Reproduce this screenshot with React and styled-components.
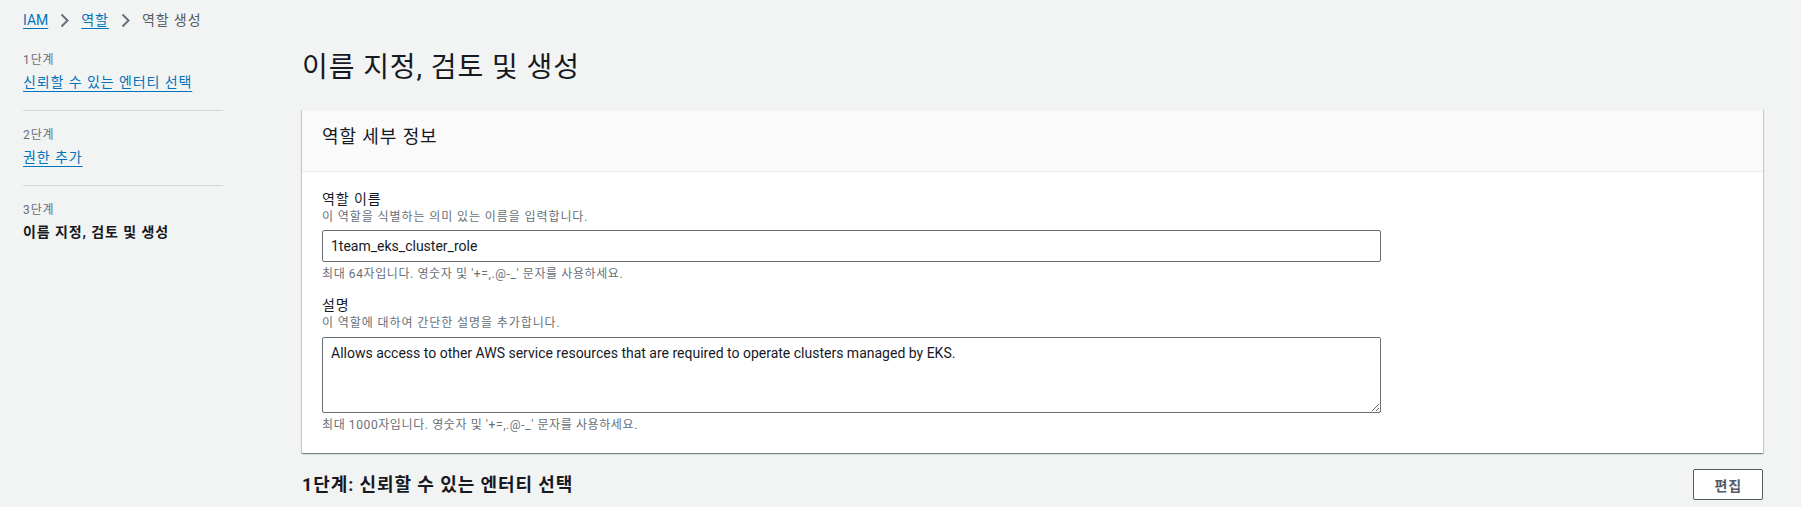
import React from "react"
import styled, { createGlobalStyle } from "styled-components"

const GlobalStyle = createGlobalStyle`
  html, body {
    margin: 0;
    padding: 0;
    background: #f2f3f3;
    font-family: Roboto, "Noto Sans CJK KR", sans-serif;
    color: #16191f;
    font-size: 14px;
  }
  body {
    overflow: hidden;
  }
`

// hangul in the reference runs a little wider than Noto Sans CJK KR
const Page = styled.div`
  padding: 10px 38px 0 23px;
  box-sizing: border-box;
  width: 1801px;
  height: 507px;
  letter-spacing: 0.065em;
`

const Breadcrumbs = styled.nav`
  display: flex;
  align-items: center;
  gap: 12px;
  height: 20px;
  line-height: 20px;
  font-size: 14px;
`

const Crumb = styled.a`
  color: ${p => (p.$current ? "#545b64" : "#0073bb")};
  text-decoration: ${p => (p.$current ? "none" : "underline")};
  text-underline-offset: 3px;
  letter-spacing: ${p => (p.$latin ? "normal" : "inherit")};
`

const Layout = styled.div`
  display: grid;
  grid-template-columns: 200px 1fr;
  column-gap: 79px;
  margin-top: 20px;
`

const Steps = styled.ol`
  list-style: none;
  margin: 2px 0 0;
  padding: 0;
`

const Step = styled.li`
  padding-bottom: 18px;
  margin-bottom: 16px;
  border-bottom: 1px solid #d5dbdb;

  &:last-child {
    border-bottom: none;
  }
`

const StepLabel = styled.div`
  font-size: 12px;
  line-height: 16px;
  color: #687078;
  margin-bottom: 4px;
`

const StepLink = styled.a`
  display: inline-block;
  font-size: 14px;
  line-height: 20px;
  color: #0073bb;
  text-decoration: underline;
  text-underline-offset: 4px;
`

const StepCurrent = styled.div`
  font-size: 14px;
  line-height: 20px;
  font-weight: 700;
  color: #16191f;
`

const Main = styled.main`
  min-width: 0;
`

const Title = styled.h1`
  margin: 0 0 23px;
  font-size: 28px;
  line-height: 36px;
  font-weight: 400;
  color: #16191f;
`

const Container = styled.section`
  background: #fff;
  box-shadow: 0 1px 1px 0 rgba(0, 28, 36, 0.3), 1px 1px 1px 0 rgba(0, 28, 36, 0.15),
    -1px 1px 1px 0 rgba(0, 28, 36, 0.15);
  border-top: 1px solid #eaeded;
`

const ContainerHeader = styled.div`
  background: #fafafa;
  border-bottom: 1px solid #eaeded;
  padding: 16px 20px 23px;
`

const ContainerTitle = styled.h2`
  margin: 0;
  font-size: 18px;
  line-height: 22px;
  font-weight: 400;
  color: #16191f;
`

const ContainerBody = styled.div`
  padding: 17px 20px 20px;
  display: flex;
  flex-direction: column;
  gap: 13px;
`

const Field = styled.div`
  display: flex;
  flex-direction: column;
`

const Label = styled.label`
  font-size: 14px;
  line-height: 20px;
  color: #16191f;
`

const Description = styled.div`
  font-size: 12px;
  line-height: 16px;
  color: #687078;
  margin-bottom: ${p => p.$gap || 5}px;
`

const Constraint = styled.div`
  font-size: 12px;
  line-height: 16px;
  color: #687078;
  letter-spacing: 0.05em;
  margin-top: 4px;
`

const TextInput = styled.input`
  box-sizing: border-box;
  width: 1059px;
  height: 32px;
  padding: 4px 8px;
  border: 1px solid #687078;
  border-radius: 2px;
  font-family: inherit;
  font-size: 14px;
  letter-spacing: normal;
  color: #16191f;
  background: #fff;
  outline: none;
`

const TextArea = styled.textarea`
  display: block;
  box-sizing: border-box;
  width: 1059px;
  height: 76px;
  padding: 4px 8px;
  border: 1px solid #687078;
  border-radius: 2px;
  font-family: inherit;
  font-size: 14px;
  letter-spacing: normal;
  line-height: 22px;
  color: #16191f;
  background: #fff;
  resize: vertical;
  outline: none;
`

const SectionRow = styled.div`
  display: flex;
  align-items: center;
  justify-content: space-between;
  margin-top: 16px;
`

const SectionTitle = styled.h2`
  margin: 0;
  font-size: 18px;
  line-height: 22px;
  font-weight: 700;
  color: #16191f;
`

const Button = styled.button`
  height: 31px;
  padding: 0 20px;
  background: #fff;
  border: 1px solid #545b64;
  border-radius: 2px;
  font-family: inherit;
  font-size: 14px;
  font-weight: 700;
  letter-spacing: inherit;
  color: #545b64;
`

const Chevron = () => (
  <svg width="9" height="15" viewBox="0 0 9 15" aria-hidden="true">
    <path d="M1.5 1.5 L7.5 7.5 L1.5 13.5" fill="none" stroke="#687078" strokeWidth="2" />
  </svg>
)

const steps = [
  { label: "1단계", title: "신뢰할 수 있는 엔터티 선택" },
  { label: "2단계", title: "권한 추가" },
  { label: "3단계", title: "이름 지정, 검토 및 생성", current: true },
]

const App = () => {
  return (
    <>
      <GlobalStyle />
      <Page>
        <Breadcrumbs>
          <Crumb href="#" $latin>IAM</Crumb>
          <Chevron />
          <Crumb href="#">역할</Crumb>
          <Chevron />
          <Crumb $current>역할 생성</Crumb>
        </Breadcrumbs>
        <Layout>
          <Steps>
            {steps.map(s => (
              <Step key={s.label}>
                <StepLabel>{s.label}</StepLabel>
                {s.current ? (
                  <StepCurrent>{s.title}</StepCurrent>
                ) : (
                  <StepLink href="#">{s.title}</StepLink>
                )}
              </Step>
            ))}
          </Steps>
          <Main>
            <Title>이름 지정, 검토 및 생성</Title>
            <Container>
              <ContainerHeader>
                <ContainerTitle>역할 세부 정보</ContainerTitle>
              </ContainerHeader>
              <ContainerBody>
                <Field>
                  <Label>역할 이름</Label>
                  <Description>이 역할을 식별하는 의미 있는 이름을 입력합니다.</Description>
                  <TextInput defaultValue="1team_eks_cluster_role" />
                  <Constraint>최대 64자입니다. 영숫자 및 '+=,.@-_' 문자를 사용하세요.</Constraint>
                </Field>
                <Field>
                  <Label>설명</Label>
                  <Description $gap={6}>이 역할에 대하여 간단한 설명을 추가합니다.</Description>
                  <TextArea defaultValue="Allows access to other AWS service resources that are required to operate clusters managed by EKS." />
                  <Constraint>최대 1000자입니다. 영숫자 및 '+=,.@-_' 문자를 사용하세요.</Constraint>
                </Field>
              </ContainerBody>
            </Container>
            <SectionRow>
              <SectionTitle>1단계: 신뢰할 수 있는 엔터티 선택</SectionTitle>
              <Button>편집</Button>
            </SectionRow>
          </Main>
        </Layout>
      </Page>
    </>
  )
}

export default App
